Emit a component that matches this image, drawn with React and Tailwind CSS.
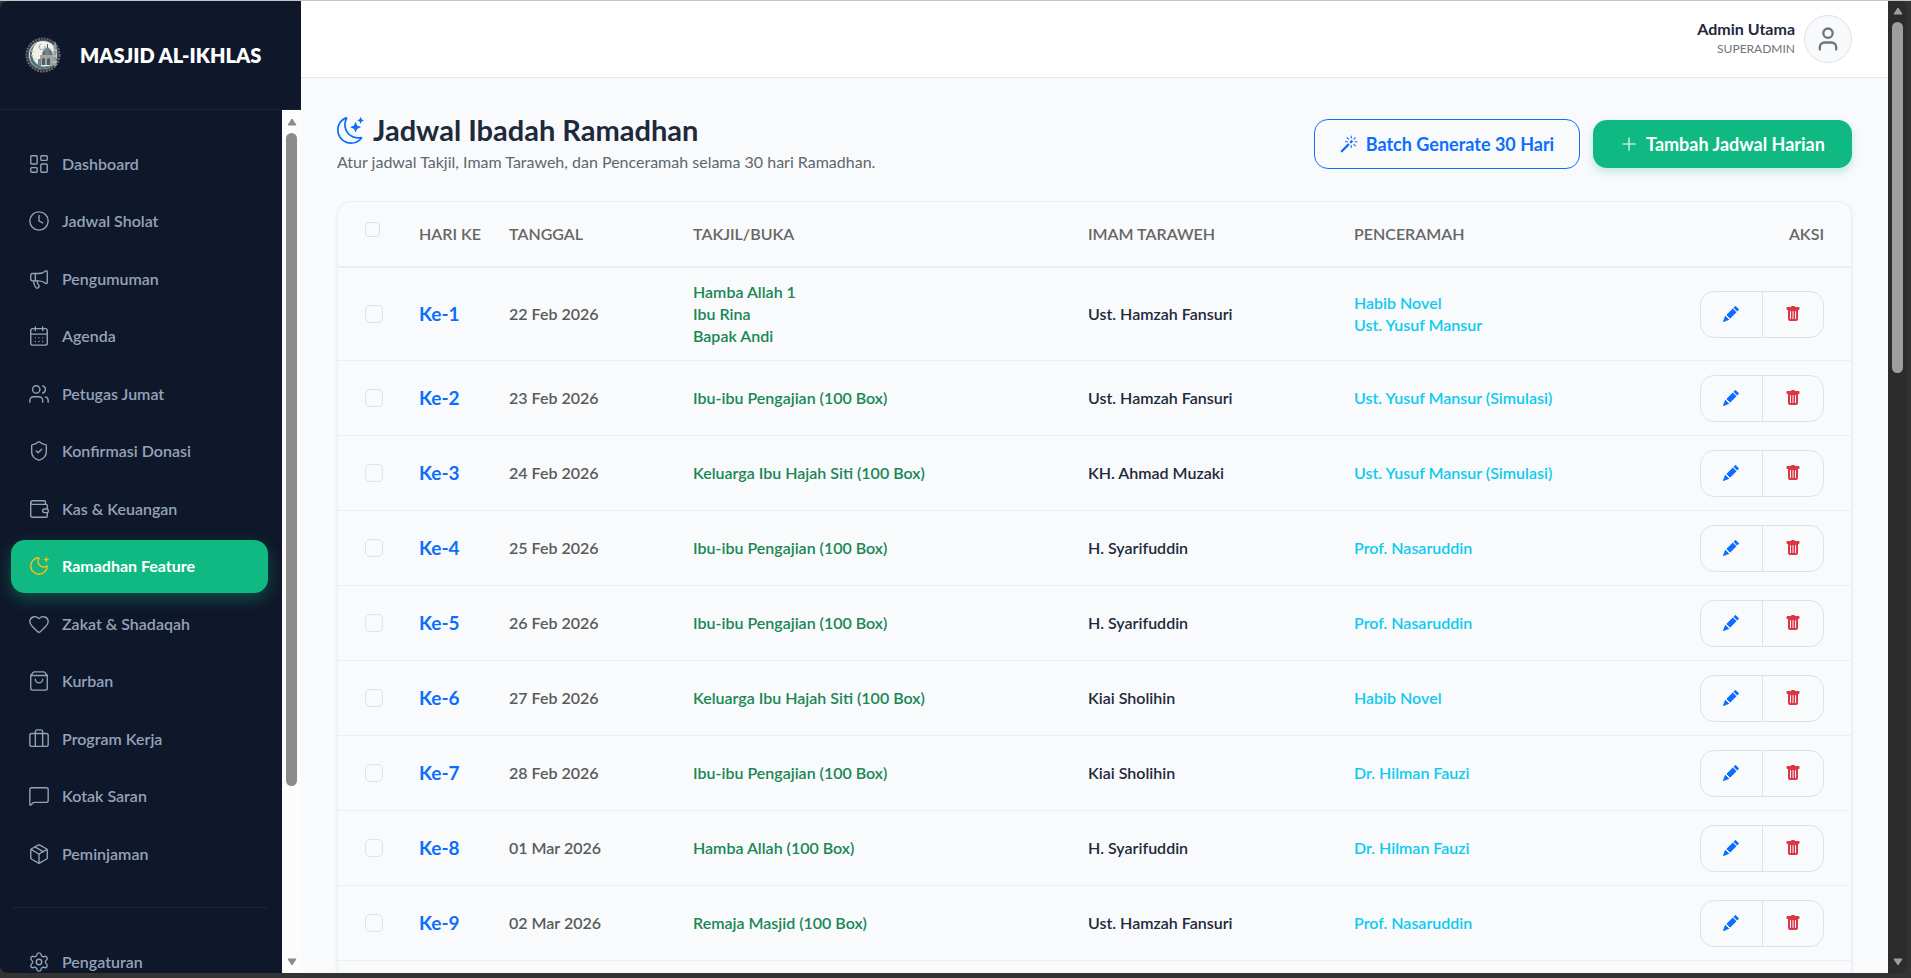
import React from 'react';
import {
  Briefcase,
  CalendarDays,
  Clock,
  Heart,
  LayoutDashboard,
  Megaphone,
  MessageSquare,
  MoonStar,
  Package,
  Settings,
  ShieldCheck,
  ShoppingBag,
  User,
  Users,
  Wallet,
} from 'lucide-react';
import { BsMagic, BsMoonStars, BsPencilFill, BsPlusLg, BsTrashFill } from 'react-icons/bs';

const menu = [
  { label: 'Dashboard', icon: LayoutDashboard },
  { label: 'Jadwal Sholat', icon: Clock },
  { label: 'Pengumuman', icon: Megaphone },
  { label: 'Agenda', icon: CalendarDays },
  { label: 'Petugas Jumat', icon: Users },
  { label: 'Konfirmasi Donasi', icon: ShieldCheck },
  { label: 'Kas & Keuangan', icon: Wallet },
  { label: 'Ramadhan Feature', icon: MoonStar, active: true },
  { label: 'Zakat & Shadaqah', icon: Heart },
  { label: 'Kurban', icon: ShoppingBag },
  { label: 'Program Kerja', icon: Briefcase },
  { label: 'Kotak Saran', icon: MessageSquare },
  { label: 'Peminjaman', icon: Package },
];

const schedule = [
  {
    day: 1,
    date: '22 Feb 2026',
    takjil: ['Hamba Allah 1', 'Ibu Rina', 'Bapak Andi'],
    imam: 'Ust. Hamzah Fansuri',
    speakers: ['Habib Novel', 'Ust. Yusuf Mansur'],
  },
  { day: 2, date: '23 Feb 2026', takjil: ['Ibu-ibu Pengajian (100 Box)'], imam: 'Ust. Hamzah Fansuri', speakers: ['Ust. Yusuf Mansur (Simulasi)'] },
  { day: 3, date: '24 Feb 2026', takjil: ['Keluarga Ibu Hajah Siti (100 Box)'], imam: 'KH. Ahmad Muzaki', speakers: ['Ust. Yusuf Mansur (Simulasi)'] },
  { day: 4, date: '25 Feb 2026', takjil: ['Ibu-ibu Pengajian (100 Box)'], imam: 'H. Syarifuddin', speakers: ['Prof. Nasaruddin'] },
  { day: 5, date: '26 Feb 2026', takjil: ['Ibu-ibu Pengajian (100 Box)'], imam: 'H. Syarifuddin', speakers: ['Prof. Nasaruddin'] },
  { day: 6, date: '27 Feb 2026', takjil: ['Keluarga Ibu Hajah Siti (100 Box)'], imam: 'Kiai Sholihin', speakers: ['Habib Novel'] },
  { day: 7, date: '28 Feb 2026', takjil: ['Ibu-ibu Pengajian (100 Box)'], imam: 'Kiai Sholihin', speakers: ['Dr. Hilman Fauzi'] },
  { day: 8, date: '01 Mar 2026', takjil: ['Hamba Allah (100 Box)'], imam: 'H. Syarifuddin', speakers: ['Dr. Hilman Fauzi'] },
  { day: 9, date: '02 Mar 2026', takjil: ['Remaja Masjid (100 Box)'], imam: 'Ust. Hamzah Fansuri', speakers: ['Prof. Nasaruddin'] },
];

const Logo = () => (
  <svg viewBox="0 0 36 36" className="size-9 shrink-0" aria-hidden="true">
    <circle cx="18" cy="18" r="16.5" fill="none" stroke="#6b6a70" strokeWidth="2" strokeDasharray="2 1" />
    <circle cx="18" cy="18" r="15.5" fill="#57565c" />
    <circle cx="18" cy="18" r="14" fill="#f1efe9" />
    <path d="M12 6A14 14 0 0 0 13 31A14 14 0 0 0 29 27A12.500 12.500 0 0 1 12 6Z" fill="#4b7078" />
    <path d="M6 14l3 1M6 18l3 1M8 23l3-1M12 27l2-2" stroke="#b9cdcd" strokeWidth="1" />
    <path d="M17 18c0-4 3-6 5.500-8c2.500 2 5.500 4 5.500 8z" fill="#77828a" />
    <path d="M22.500 7v4M19 14v4M25 14v4" stroke="#4f5b64" strokeWidth="1" />
    <path d="M15 18h14v10H15z" fill="#a5a39b" />
    <path d="M17 28v-6q1.500-2 3 0v6zM22 28v-6q1.500-2 3 0v6z" fill="#46606a" />
    <path d="M30 4l1.500 4v21h-3V8z" fill="#8b9ba3" />
    <path d="M28 13h4M28 19h4M28 25h4" stroke="#d8dcda" strokeWidth="1" />
    <path d="M13 22h3v7h-3z" fill="#6e8589" />
    <path d="M16 7a3 3 0 1 0 4 2" fill="none" stroke="#8f9ea3" strokeWidth="1" />
    <path d="M9 28q8 3 18 0q-8 6-18 0z" fill="#5f8185" />
  </svg>
);

const Scrollbar = ({ className, thumbClass, arrowClass }) => (
  <div className={`flex w-[19px] shrink-0 flex-col items-center ${className}`} aria-hidden="true">
    <svg viewBox="0 0 10 8" className={`h-2 w-[10px] ${arrowClass}`}>
      <path d="M5 1L9 7H1Z" stroke="currentColor" strokeLinejoin="round" fill="currentColor" />
    </svg>
    <div className={`mt-[7px] w-[11px] rounded-full ${thumbClass}`} />
    <svg viewBox="0 0 10 8" className={`mt-auto h-2 w-[10px] ${arrowClass}`}>
      <path d="M5 7L9 1H1Z" stroke="currentColor" strokeLinejoin="round" fill="currentColor" />
    </svg>
  </div>
);

const MenuItem = ({ label, icon: Icon, active }) => (
  <a
    href="#"
    aria-current={active ? 'page' : undefined}
    className={`flex h-[53px] shrink-0 items-center gap-3 rounded-[14px] px-[17px] text-base ${
      active ? 'bg-[#10b981] font-bold text-white shadow-[0_6px_16px_rgba(16,185,129,0.35)]' : 'font-semibold text-[#94a3b8]'
    }`}
  >
    <Icon size={22} strokeWidth={1.5} className={active ? 'text-[#ffc107]' : ''} />
    {label}
  </a>
);

const Sidebar = () => (
  <aside className="flex w-[301px] shrink-0 flex-col bg-[#0f172a]">
    <div className="flex h-[109px] shrink-0 items-center gap-[19px] border-b border-[#1b2336] px-[25px]">
      <Logo />
      <span className="text-xl font-extrabold whitespace-nowrap text-white">MASJID AL-IKHLAS</span>
    </div>
    <div className="flex min-h-0 flex-1">
      <nav className="min-w-0 flex-1 overflow-hidden pt-[27px] pr-[14px] pl-[11px]">
        <div className="flex h-[743px] flex-col justify-between">
          {menu.map((item) => (
            <MenuItem key={item.label} {...item} />
          ))}
        </div>
        <hr className="my-[27px] border-[#1b2336]" />
        <MenuItem label="Pengaturan" icon={Settings} />
      </nav>
      <Scrollbar className="bg-[#fcfcfc] pt-2 pb-[7px]" thumbClass="h-[653px] bg-[#8b8b8b]" arrowClass="text-[#8b8b8b]" />
    </div>
  </aside>
);

const Topbar = () => (
  <header className="flex h-[77px] shrink-0 items-center justify-end gap-[9px] border-b border-[#e2e8f0] bg-white px-9">
    <div className="text-right">
      <p className="text-base leading-5 font-bold text-[#1e293b]">Admin Utama</p>
      <p className="text-xs leading-5 text-[#6c757d]">SUPERADMIN</p>
    </div>
    <button type="button" aria-label="Profil" className="flex size-12 items-center justify-center rounded-full border border-[#dee2e6] bg-[#f8f9fa] text-[#6c757d]">
      <User size={28} strokeWidth={2} />
    </button>
  </header>
);

const ScheduleRow = ({ row }) => (
  <tr className="h-[75px] border-b border-[#eceff1]">
    <td className="pl-[27px]">
      <input
        type="checkbox"
        aria-label={`Pilih hari ke-${row.day}`}
        className="block size-[18px] appearance-none rounded-[5px] border border-[#dee2e6]"
      />
    </td>
    <td className="px-[14px] text-[19px] font-bold text-[#0d6efd]">Ke-{row.day}</td>
    <td className="px-[14px] font-semibold text-[#5a5a5a]">{row.date}</td>
    <td className="px-[14px] py-[13px] leading-[22px] font-semibold text-[#198754]">
      {row.takjil.map((name) => (
        <div key={name}>{name}</div>
      ))}
    </td>
    <td className="px-[14px] font-semibold text-[#1e293b]">{row.imam}</td>
    <td className="px-[14px] leading-[22px] font-semibold text-[#0dcaf0]">
      {row.speakers.map((name) => (
        <div key={name}>{name}</div>
      ))}
    </td>
    <td className="pr-[27px]">
      <div className="ml-auto flex h-[47px] w-[124px] rounded-[14px] border border-[#dee2e6]">
        <button type="button" aria-label="Edit" className="flex flex-1 items-center justify-center border-r border-[#dee2e6] text-[#0d6efd]">
          <BsPencilFill size={16} />
        </button>
        <button type="button" aria-label="Hapus" className="flex flex-1 items-center justify-center text-[#dc3545]">
          <BsTrashFill size={16} />
        </button>
      </div>
    </td>
  </tr>
);

const ScheduleTable = () => (
  <div className="min-h-0 flex-1 overflow-hidden rounded-t-[14px] border border-b-0 border-[#eceff1] shadow-[0_2px_4px_rgba(0,0,0,0.06)]">
    <table className="w-full table-fixed border-collapse text-left text-base">
      <thead>
        <tr className="h-[65px] border-b-2 border-[#eceff1] text-[#666666]">
          <th className="w-[67px] pb-[10px] pl-[27px]">
            <input type="checkbox" aria-label="Pilih semua" className="block size-[15px] appearance-none rounded-[4px] border border-[#dee2e6]" />
          </th>
          <th className="w-[90px] px-[14px] font-semibold whitespace-nowrap">HARI KE</th>
          <th className="w-[184px] px-[14px] font-semibold">TANGGAL</th>
          <th className="w-[395px] px-[14px] font-semibold">TAKJIL/BUKA</th>
          <th className="w-[266px] px-[14px] font-semibold">IMAM TARAWEH</th>
          <th className="px-[14px] font-semibold">PENCERAMAH</th>
          <th className="w-[180px] pr-[27px] text-right font-semibold">AKSI</th>
        </tr>
      </thead>
      <tbody>
        {schedule.map((row) => (
          <ScheduleRow key={row.day} row={row} />
        ))}
      </tbody>
    </table>
  </div>
);

const App = () => {
  return (
    <div className="flex h-screen flex-col overflow-hidden border-t border-[#c4c4c4] bg-[#333333] pr-1 pb-[5px] font-['Lato',sans-serif]">
      <div className="flex min-h-0 flex-1 overflow-hidden rounded-lg">
        <Sidebar />
        <div className="flex min-w-0 flex-1 flex-col bg-[#f8fafc]">
          <Topbar />
          <main className="flex min-h-0 flex-1 flex-col px-9 pt-9">
            <div className="mb-[27px] flex items-center justify-between">
              <div>
                <h1 className="flex items-center gap-[9px] text-[29px] leading-8 font-bold text-[#1e293b]">
                  <BsMoonStars size={27} className="text-[#0d6efd]" />
                  Jadwal Ibadah Ramadhan
                </h1>
                <p className="mt-1 text-base leading-6 text-[#5f666d]">
                  Atur jadwal Takjil, Imam Taraweh, dan Penceramah selama 30 hari Ramadhan.
                </p>
              </div>
              <div className="flex items-center gap-[13px]">
                <button type="button" className="flex h-[50px] w-[266px] items-center justify-center gap-2 rounded-[14px] border border-[#0d6efd] text-lg font-bold text-[#0d6efd]">
                  <BsMagic size={18} />
                  Batch Generate 30 Hari
                </button>
                <button type="button" className="flex h-12 w-[259px] items-center justify-center gap-2 rounded-[14px] bg-[#10b981] text-lg font-bold text-white shadow-[0_4px_8px_rgba(16,185,129,0.25)]">
                  <BsPlusLg size={18} />
                  Tambah Jadwal Harian
                </button>
              </div>
            </div>
            <ScheduleTable />
          </main>
        </div>
        <Scrollbar className="bg-[#2c2c2c] pt-[6px] pb-[7px]" thumbClass="h-[351px] bg-[#9e9e9e]" arrowClass="text-[#9e9e9e]" />
      </div>
    </div>
  );
};

export default App;
